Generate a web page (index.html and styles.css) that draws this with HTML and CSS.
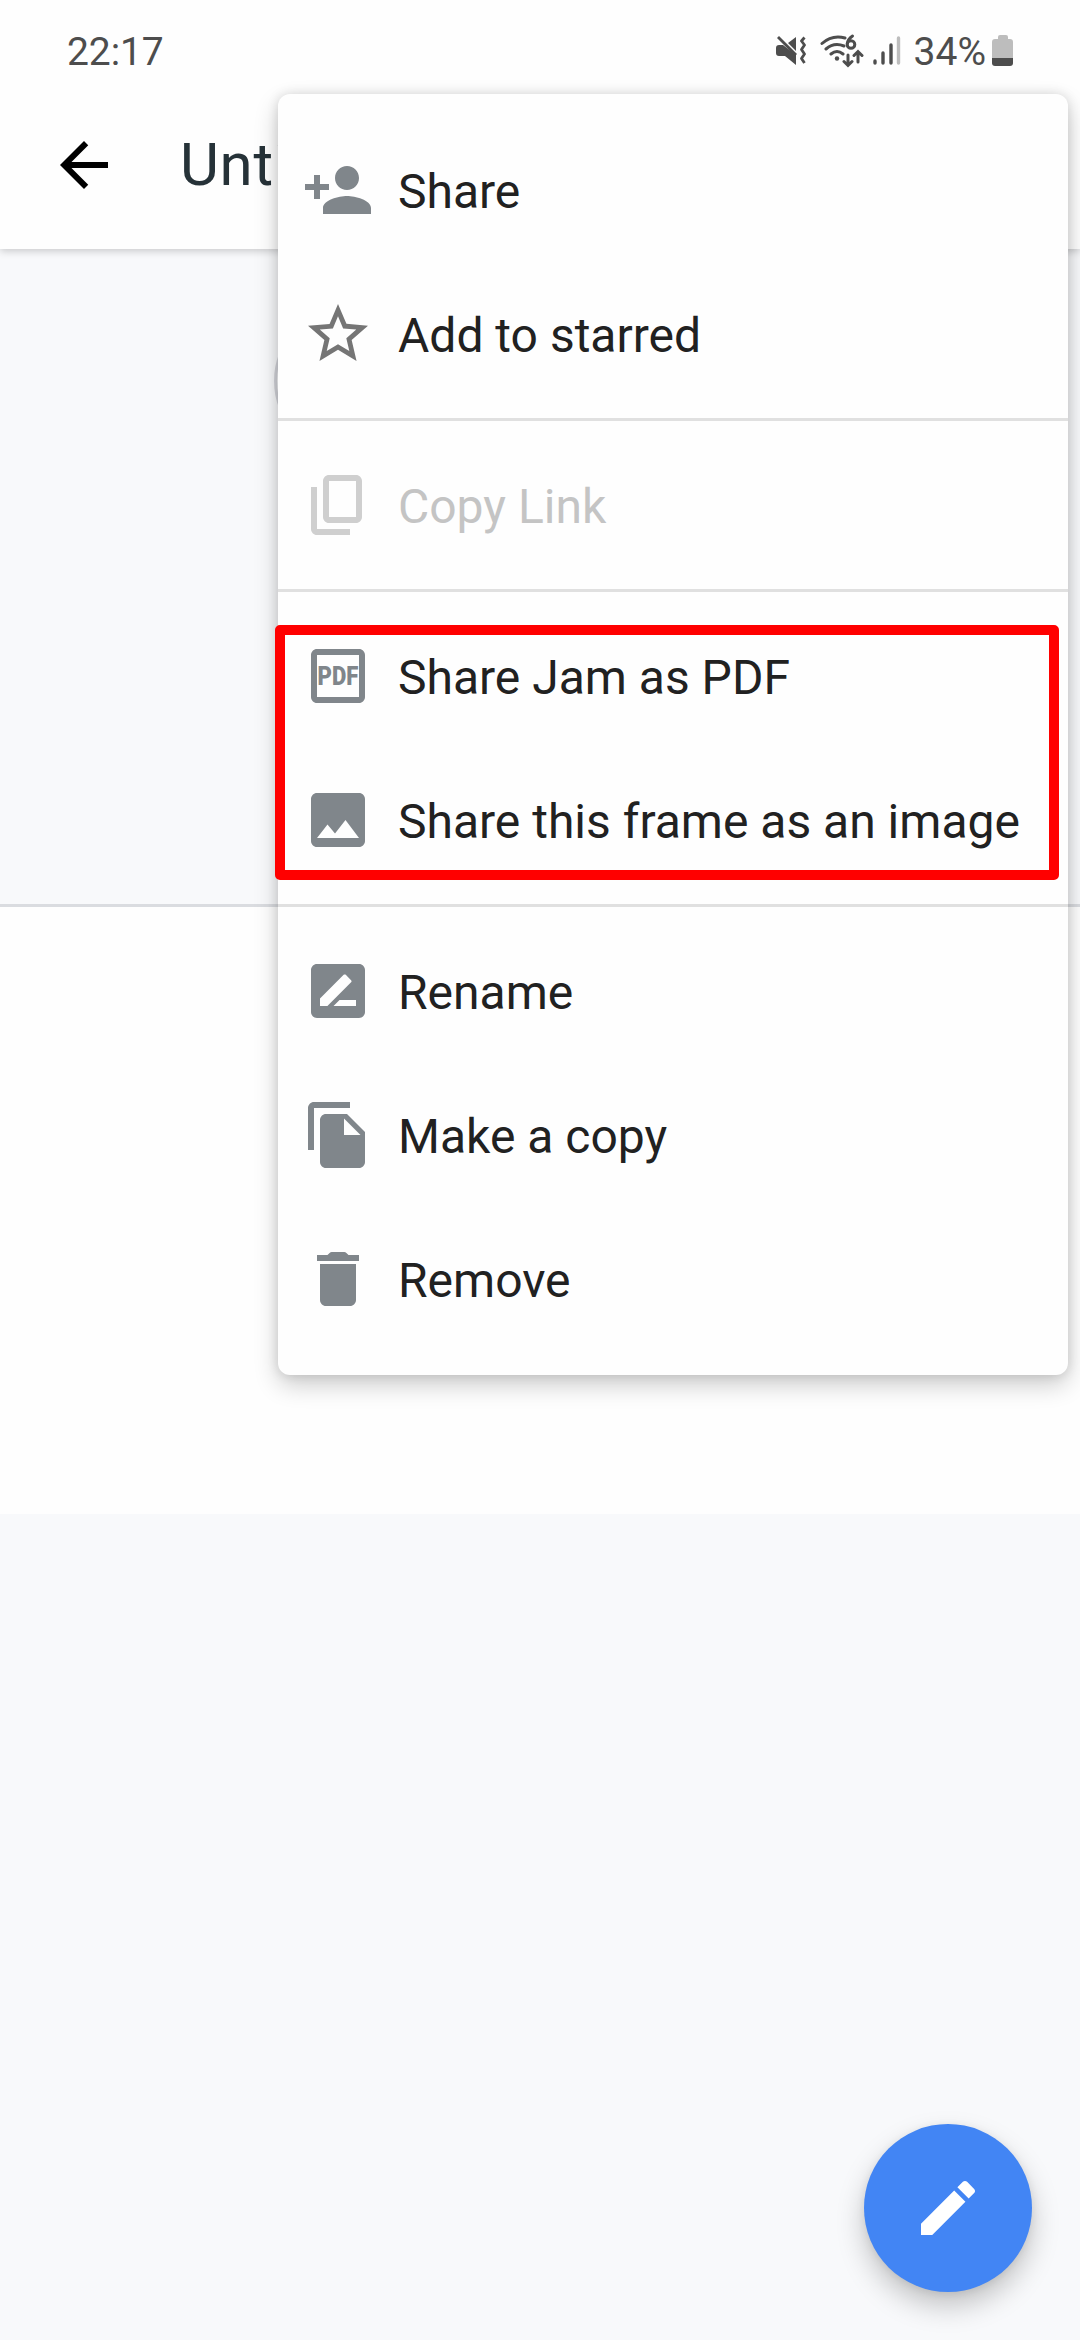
FILE: index.html
```
<!DOCTYPE html>
<html lang="en">
<head>
  <meta charset="utf-8">
  <title>Jamboard</title>
  <link rel="stylesheet" href="styles.css">
</head>
<body>
  <header class="topbar">
    <!-- Status bar -->
    <div class="status">
      <span class="clock">22:17</span>
      <div class="indicators">
        <svg class="mute" width="30" height="30" viewBox="0 0 30 30">
          <path fill="#4d4d4d" d="M3 9h4l13 10v10l-11-9H3q-3 0-3-3v-5q0-3 3-3zM12 7l8-6v14z"/>
          <path fill="none" stroke="#4d4d4d" stroke-width="2.800" d="M2 1l18 18"/>
          <path fill="none" stroke="#4d4d4d" stroke-width="2.800" stroke-linejoin="round" d="M28.500 1.500L25.500 5l3 4-3 4.500 3 4.500-3 4.500 3 4.500"/>
        </svg>
        <svg class="wifi" width="44" height="34" viewBox="0 0 44 34">
          <g fill="none" stroke="#4d4d4d" stroke-width="3" stroke-linecap="round">
            <path d="M2 9.500Q12 0.500 25 4M6 15q8-7 18-3M11 20q6-5 12 0"/>
            <circle cx="31" cy="10.500" r="3.800"/>
            <path d="M27.300 9.500Q28 5 32.500 2M28 21v10M24 27.500l4 4 4-4M38 28V18M34 21.500l4-4 4 4"/>
          </g>
          <circle fill="#4d4d4d" cx="17" cy="24.500" r="2.200"/>
        </svg>
        <svg class="signal" width="28" height="30" viewBox="0 0 28 30">
          <path fill="none" stroke="#4d4d4d" stroke-width="3.400" stroke-linecap="round" d="M2 25v2M10 17v10M18 9v18"/>
          <path fill="none" stroke="#bdbdbd" stroke-width="3.400" stroke-linecap="round" d="M25.500 2v25"/>
        </svg>
        <span class="percent">34%</span>
        <svg class="battery" width="22" height="32" viewBox="0 0 22 32">
          <path fill="#bdbdbd" d="M6 4V2q0-2 2-2h6q2 0 2 2v2h2q3 0 3 3v16H0V7q0-3 3-3z"/>
          <path fill="#4d4d4d" d="M0 23h21v5q0 3-3 3H3q-3 0-3-3z"/>
        </svg>
      </div>
    </div>
    <!-- App bar -->
    <div class="appbar">
      <svg class="icon back" viewBox="0 0 24 24"><path d="M20 11H7.830l5.590-5.590L12 4l-8 8 8 8 1.410-1.410L7.830 13H20v-2z"/></svg>
      <h1 class="title">Unti</h1>
    </div>
  </header>

  <main class="board">
    <div class="toolbar"><span class="handle"></span></div>
    <div class="frame"></div>
  </main>

  <!-- Overflow menu -->
  <nav class="menu">
    <a class="item">
      <svg class="icon" viewBox="0 0 24 24"><path d="M15 12c2.210 0 4-1.790 4-4s-1.790-4-4-4-4 1.790-4 4 1.790 4 4 4zm-9-2V7H4v3H1v2h3v3h2v-3h3v-2H6zm9 4c-2.670 0-8 1.340-8 4v2h16v-2c0-2.660-5.330-4-8-4z"/></svg>
      <span class="label">Share</span>
    </a>
    <a class="item">
      <svg class="icon star" viewBox="0 0 24 24"><path d="M22 9.240l-7.190-.62L12 2 9.190 8.630 2 9.240l5.460 4.730L5.820 21 12 17.270 18.180 21l-1.630-7.030L22 9.240zM12 15.400l-3.760 2.270 1-4.280-3.320-2.880 4.380-.38L12 6.100l1.710 4.040 4.380.38-3.320 2.880 1 4.280L12 15.400z"/></svg>
      <span class="label">Add to starred</span>
    </a>
    <div class="divider"></div>
    <a class="item disabled">
      <svg class="icon" viewBox="0 0 24 24"><path d="M3 6h2v14h11v2H5c-1.100 0-2-.9-2-2zM18 2H9c-1.100 0-2 .9-2 2v12c0 1.100.9 2 2 2h9c1.100 0 2-.9 2-2V4c0-1.100-.9-2-2-2zm0 14H9V4h9z"/></svg>
      <span class="label">Copy Link</span>
    </a>
    <div class="divider"></div>
    <a class="item">
      <svg class="icon" viewBox="0 0 24 24">
        <path d="M19 3H5c-1.100 0-2 .9-2 2v14c0 1.100.9 2 2 2h14c1.100 0 2-.9 2-2V5c0-1.100-.9-2-2-2zm0 16H5V5h14z"/>
        <text class="pdf" x="5.200" y="15" textLength="13.600" lengthAdjust="spacingAndGlyphs">PDF</text>
      </svg>
      <span class="label">Share Jam as PDF</span>
    </a>
    <a class="item">
      <svg class="icon" viewBox="0 0 24 24"><path d="M21 19V5c0-1.100-.9-2-2-2H5c-1.100 0-2 .9-2 2v14c0 1.100.9 2 2 2h14c1.100 0 2-.9 2-2zM8.500 13.500l2.500 3.010L14.500 12l4.500 6H5l3.500-4.500z"/></svg>
      <span class="label">Share this frame as an image</span>
    </a>
    <div class="divider"></div>
    <a class="item">
      <svg class="icon" viewBox="0 0 24 24"><path fill-rule="evenodd" d="M19 3H5c-1.100 0-2 .9-2 2v14c0 1.100.9 2 2 2h14c1.100 0 2-.9 2-2V5c0-1.100-.9-2-2-2zM6 17v-2.500l7.880-7.880c.2-.2.510-.2.710 0l1.770 1.770c.2.2.2.510 0 .710L8.470 17H6zm12 0h-7.500l2-2H18v2z"/></svg>
      <span class="label">Rename</span>
    </a>
    <a class="item">
      <svg class="icon" viewBox="0 0 24 24"><path d="M16 1H4c-1.100 0-2 .9-2 2v14h2V3h12V1zm-1 4l6 6v10c0 1.100-.9 2-2 2H8c-1.100 0-2-.9-2-2V7c0-1.100.9-2 2-2h7zm-1 7h5.500L14 6.500V12z"/></svg>
      <span class="label">Make a copy</span>
    </a>
    <a class="item">
      <svg class="icon" viewBox="0 0 24 24"><path d="M6 19c0 1.100.9 2 2 2h8c1.100 0 2-.9 2-2V7H6v12zM19 4h-3.500l-.7-.7q-.3-.3-.7-.3H9.900q-.4 0-.7.3l-.7.7H5v2h14V4z"/></svg>
      <span class="label">Remove</span>
    </a>
    <div class="highlight"></div>
  </nav>

  <button class="fab">
    <svg class="icon" viewBox="0 0 24 24"><path d="M3 17.250V21h3.750L17.810 9.940l-3.750-3.750L3 17.250zM20.710 7.040c.39-.39.39-1.020 0-1.410l-2.340-2.340c-.39-.39-1.020-.39-1.410 0l-1.830 1.830 3.750 3.750 1.830-1.830z"/></svg>
  </button>
</body>
</html>
```
FILE: styles.css
```
* {
  box-sizing: border-box;
}
body {
  margin: 0;
  width: 1080px;
  height: 2340px;
  position: relative;
  overflow: hidden;
  display: flex;
  flex-direction: column;
  background-color: #f8f9fb;
  font-family: Roboto, sans-serif;
}
.icon {
  display: block;
  flex: none;
  width: 72px;
  height: 72px;
  fill: #80868b;
}

/* Status bar and app bar */
.topbar {
  height: 249px;
  background-color: #fefefe;
  box-shadow: 0 2px 8px rgba(0, 0, 0, 0.2);
  z-index: 1;
}
.status {
  display: flex;
  justify-content: space-between;
  height: 94px;
  padding: 0 66px 0 67px;
  color: #4d4d4d;
  font-size: 39px;
  line-height: 104px;
}
.clock {
  letter-spacing: -0.1px;
}
.indicators {
  display: flex;
}
.mute {
  margin: 36px 14px 0 0;
}
.wifi {
  margin: 34px 9px 0 0;
}
.signal {
  margin: 36px 13px 0 0;
}
.percent {
  margin-right: 6px;
}
.battery {
  margin-top: 35px;
}
.appbar {
  display: flex;
  align-items: center;
  height: 142px;
  padding-left: 48px;
}
.back {
  fill: #000;
}
.title {
  width: 98px;
  margin: 0 0 0 60px;
  overflow: hidden;
  color: #263238;
  font-size: 60px;
  font-weight: 400;
  letter-spacing: 0.7px;
  line-height: 70px;
}

/* Drawing area */
.board {
  display: flex;
  flex-direction: column;
}
.toolbar {
  height: 658px;
  padding: 60px 0 0 274px;
  border-bottom: 3px solid #dadce0;
}
.handle {
  display: block;
  width: 532px;
  height: 144px;
  border: 3px solid #d3d4da;
  border-radius: 72px;
}
.frame {
  height: 607px;
  background-color: #fefefe;
}

/* Overflow menu */
.menu {
  position: absolute;
  top: 94px;
  right: 12px;
  width: 790px;
  padding: 24px 0;
  background-color: #fefefe;
  border-radius: 12px;
  box-shadow: 0 10px 24px rgba(0, 0, 0, 0.2), 0 0 12px rgba(0, 0, 0, 0.12);
  z-index: 2;
}
.item {
  display: flex;
  align-items: center;
  gap: 24px;
  height: 144px;
  padding-left: 24px;
  color: #212121;
  font-size: 48px;
  line-height: 56px;
  white-space: nowrap;
}
.label {
  padding-top: 3px;
}
.star {
  fill: #757575;
}
.disabled {
  color: #c4c4c4;
}
.disabled .icon {
  fill: #cfcfcf;
}
.pdf {
  font-size: 8.4px;
  font-weight: 900;
}
.divider {
  height: 3px;
  margin: 12px 0;
  background-color: #e0e0e0;
}
/* Red box around the two share options */
.highlight {
  position: absolute;
  top: 531px;
  left: -3px;
  width: 784px;
  height: 255px;
  border: 10px solid #f00;
  border-radius: 5px;
}

.fab {
  position: absolute;
  right: 48px;
  bottom: 48px;
  display: flex;
  align-items: center;
  justify-content: center;
  width: 168px;
  height: 168px;
  padding: 0;
  border: none;
  border-radius: 50%;
  background-color: #4285f4;
  box-shadow: 0 14px 28px rgba(0, 0, 0, 0.22), 0 2px 8px rgba(0, 0, 0, 0.08);
}
.fab .icon {
  fill: #fff;
}
```
